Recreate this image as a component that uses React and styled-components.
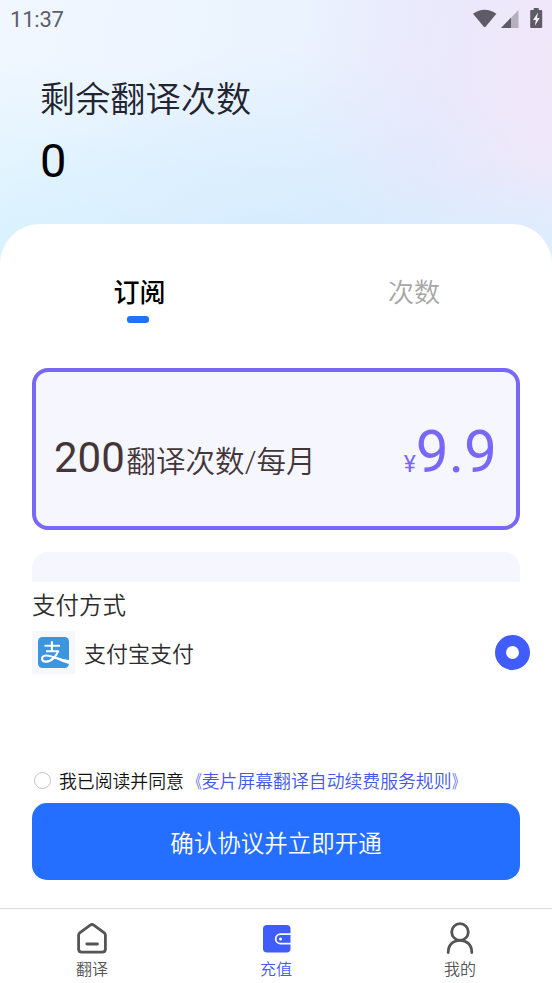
import React, { useState } from 'react'
import styled, { createGlobalStyle } from 'styled-components'

const GlobalStyle = createGlobalStyle`
* {
  box-sizing: border-box;
}
body {
  margin: 0;
  background: #fff;
  font-family: Roboto, 'Noto Sans CJK SC', sans-serif;
}
button {
  border: 0;
  padding: 0;
  background: none;
  font-family: inherit;
}
`

const Page = styled.div`
display: flex;
flex-direction: column;
height: 983px;
overflow: hidden;
background:
  radial-gradient(ellipse 220px 130px at 552px 290px, #d6f0ff 0%, rgba(226, 241, 255, 0) 100%),
  radial-gradient(ellipse 260px 220px at 552px 60px, rgba(242, 232, 249, .7) 0%, rgba(240, 233, 250, 0) 100%),
  radial-gradient(ellipse 320px 210px at 290px 260px, #d3ecfe 0%, rgba(214, 236, 254, .75) 35%, rgba(214, 236, 254, 0) 100%),
  radial-gradient(ellipse 340px 240px at 0 290px, #d3f2fe 0%, rgba(211, 242, 254, 0) 100%),
  linear-gradient(98deg, #f1f7ff 0, #eaf3fe 45%, #e5e8fd 66%, #ede7fa 80%, #f1e8f9 100%);
`

const StatusBar = styled.div`
display: flex;
align-items: center;
justify-content: space-between;
height: 38px;
padding: 0 9px 0 10px;
color: #5d5e68;
font-size: 22px;
letter-spacing: -.2px;
`

const Balance = styled.header`
height: 186px;
padding: 36px 40px 0;
`

const BalanceTitle = styled.h1`
margin: 0;
color: #22242f;
font-size: 35.2px;
font-weight: 350;
line-height: 52px;
`

const BalanceCount = styled.div`
color: #000;
font-size: 47px;
line-height: 56px;
margin-top: 7px;
`

const Sheet = styled.main`
flex: 1;
display: flex;
flex-direction: column;
border-radius: 40px 40px 0 0;
background: #fff;
`

const Tabs = styled.div`
display: flex;
height: 144px;
padding-top: 49px;
`

const Tab = styled.button`
flex: 1;
display: flex;
flex-direction: column;
align-items: center;
gap: 3px;
color: ${({ $active }) => $active ? '#000' : '#a6a6a6'};
font-size: 26px;
font-weight: ${({ $active }) => $active ? 500 : 350};
line-height: 40px;

&::after {
  content: '';
  width: 22px;
  height: 7px;
  border-radius: 3px;
  background: ${({ $active }) => $active ? '#246fff' : 'transparent'};
}
`

const TabLabel = styled.span`
padding-left: ${({ $active }) => $active ? '3px' : 0};
`

const Plans = styled.div`
height: 214px;
padding: 0 32px;
overflow: hidden;
`

const Plan = styled.div`
display: flex;
align-items: baseline;
justify-content: space-between;
height: 162px;
margin-bottom: 22px;
padding: 42px 19px 0 18px;
border: 4px solid ${({ $selected }) => $selected ? '#7967fa' : '#f6f6ff'};
border-radius: 16px;
background: #f6f6ff;
`

const Quota = styled.div`
color: #443638;
font-size: 29.6px;
font-weight: 350;
line-height: 76px;
`

const QuotaCount = styled.span`
font-size: 42px;
font-weight: 400;
margin-right: 1.5px;
`

const Price = styled.div`
color: #7967fa;
font-size: 58.5px;
line-height: 76px;
`

const Currency = styled.span`
font-size: 23px;
`

const Payment = styled.section`
height: 191px;
padding: 6px 22px 0 32px;
color: #2c2c2c;
font-weight: 350;
`

const PaymentTitle = styled.h2`
margin: 0;
font-size: 23.5px;
font-weight: 350;
line-height: 37px;
`

const PaymentRow = styled.div`
display: flex;
align-items: center;
height: 43px;
margin-top: 6px;
font-size: 22px;
`

const PaymentLogo = styled.span`
display: flex;
align-items: center;
justify-content: center;
width: 43px;
height: 43px;
margin-right: 9px;
background: #f5f7fa;
`

const PaymentName = styled.span`
padding-bottom: 2px;
`

const Radio = styled.span`
width: 35px;
height: 35px;
margin-left: auto;
border: 11px solid #405cfb;
border-radius: 50%;
`

const Agreement = styled.label`
display: flex;
align-items: center;
height: 30px;
margin-top: -8px;
padding-left: 34px;
color: #111;
font-size: 17.85px;
font-weight: 350;
white-space: nowrap;
`

const Circle = styled.span`
width: 17px;
height: 17px;
margin-right: 8px;
border: 1.5px solid #c4c4c4;
border-radius: 50%;
`

const RulesLink = styled.a`
color: #4658e8;
`

const Bracket = styled.span`
display: inline-block;
transform: scaleX(.7);
transform-origin: ${({ $side }) => $side} center;
`

const Submit = styled.button`
height: 77px;
margin: 8px 32px 0;
border-radius: 15px;
background: #246fff;
color: #fff;
font-size: 23.5px;
font-weight: 350;
`

const NavBar = styled.nav`
display: flex;
height: 75px;
border-top: 1px solid #d9d9d9;
background: #fff;
`

const NavItem = styled.button`
flex: 1;
display: flex;
flex-direction: column;
align-items: center;
gap: 3px;
padding-top: 12px;
color: ${({ $active }) => $active ? '#405cfb' : '#555'};
font-size: 16px;
font-weight: 350;
line-height: 24px;
`

const StatusIcons = () => (
  <svg width="70" height="22" viewBox="0 0 70 22">
    <path d="M0 5.7Q11.700-2.300 23.400 5.700L12.600 18.700Q11.700 19.600 10.800 18.700Z" fill="#5f5b66" />
    <path d="M28 20L45.500 2V20Z" fill="#b6b0bd" />
    <path d="M28 20L38 9.700V20Z" fill="#5f5b66" />
    <path d="M60.700 0h5v2h2.500q1 0 1 1V19q0 1-1 1H58.200q-1 0-1-1V3q0-1 1-1H60.700Z" fill="#5f5b66" />
    <path d="M65 4.500L60 12H62.800L61.900 17.800L66.700 10H64Z" fill="#f4effa" />
  </svg>
)

const AlipayIcon = () => (
  <svg width="31" height="31" viewBox="0 0 31 31" fill="none" stroke="#fff" strokeWidth="2.100">
    <rect width="31" height="31" rx="4.500" fill="#3b95df" stroke="none" />
    <path d="M13.900 4.300V14.300M6.500 8.800H22M8 14.200H20.500" />
    <path d="M20.500 13.600C18.300 19 13.600 24.600 8.200 24.600C2.700 24.600 2.800 18.900 8 18.500C13.500 18.200 20.500 23 31 24.600" />
    <path d="M17 19.500Q24 22.300 31 23V27Q24 25 17 21.500Z" fill="#fff" stroke="none" />
  </svg>
)

const HomeIcon = () => (
  <svg width="34" height="34" viewBox="0 0 34 34" fill="none" stroke="currentColor" strokeWidth="2.8" strokeLinecap="round" strokeLinejoin="round">
    <path d="M15.200 4.200Q17 2.900 18.800 4.200L29.300 11.800Q30.400 12.600 30.400 14V28Q30.400 31.200 27.200 31.200H6.800Q3.600 31.200 3.600 28V14Q3.600 12.600 4.700 11.800Z" />
    <path d="M11.800 23H22.500" />
  </svg>
)

const WalletIcon = () => (
  <svg width="34" height="34" viewBox="0 0 34 34">
    <rect x="4" y="4" width="27.500" height="27.500" rx="4" fill="currentColor" />
    <path d="M32 13.200H21.400A4.700 4.700 0 0 0 21.400 22.600H32" fill="none" stroke="#fff" strokeWidth="1.800" />
    <circle cx="21.500" cy="17.900" r="1.500" fill="#fff" />
  </svg>
)

const UserIcon = () => (
  <svg width="34" height="34" viewBox="0 0 34 34" fill="none" stroke="currentColor" strokeWidth="2.800">
    <circle cx="17" cy="11" r="8.300" />
    <path d="M5.200 31.500C5.200 24 10.200 19.300 17 19.300S28.800 24 28.800 31.500" strokeLinecap="round" />
  </svg>
)

const tabs = ['订阅', '次数']

const navItems = [{
  title: '翻译',
  icon: HomeIcon
}, {
  title: '充值',
  icon: WalletIcon
}, {
  title: '我的',
  icon: UserIcon
}]

const App = () => {
  const [tab, setTab] = useState('订阅')
  const [nav, setNav] = useState('充值')

  return (
    <Page>
      <GlobalStyle />
      <StatusBar>
        <span>11:37</span>
        <StatusIcons />
      </StatusBar>
      <Balance>
        <BalanceTitle>剩余翻译次数</BalanceTitle>
        <BalanceCount>0</BalanceCount>
      </Balance>
      <Sheet>
        <Tabs>
          {tabs.map(title => (
            <Tab key={title} $active={title === tab} onClick={() => setTab(title)}>
              <TabLabel $active={title === tab}>{title}</TabLabel>
            </Tab>
          ))}
        </Tabs>
        <Plans>
          <Plan $selected>
            <Quota><QuotaCount>200</QuotaCount>翻译次数/每月</Quota>
            <Price><Currency>¥</Currency>9.9</Price>
          </Plan>
          <Plan />
        </Plans>
        <Payment>
          <PaymentTitle>支付方式</PaymentTitle>
          <PaymentRow>
            <PaymentLogo><AlipayIcon /></PaymentLogo>
            <PaymentName>支付宝支付</PaymentName>
            <Radio />
          </PaymentRow>
        </Payment>
        <Agreement>
          <Circle />
          我已阅读并同意
          <RulesLink>
            <Bracket $side="right">《</Bracket>麦片屏幕翻译自动续费服务规则<Bracket $side="left">》</Bracket>
          </RulesLink>
        </Agreement>
        <Submit>确认协议并立即开通</Submit>
      </Sheet>
      <NavBar>
        {navItems.map(({ title, icon: Icon }) => (
          <NavItem key={title} $active={title === nav} onClick={() => setNav(title)}>
            <Icon />
            {title}
          </NavItem>
        ))}
      </NavBar>
    </Page>
  )
}

export default App
